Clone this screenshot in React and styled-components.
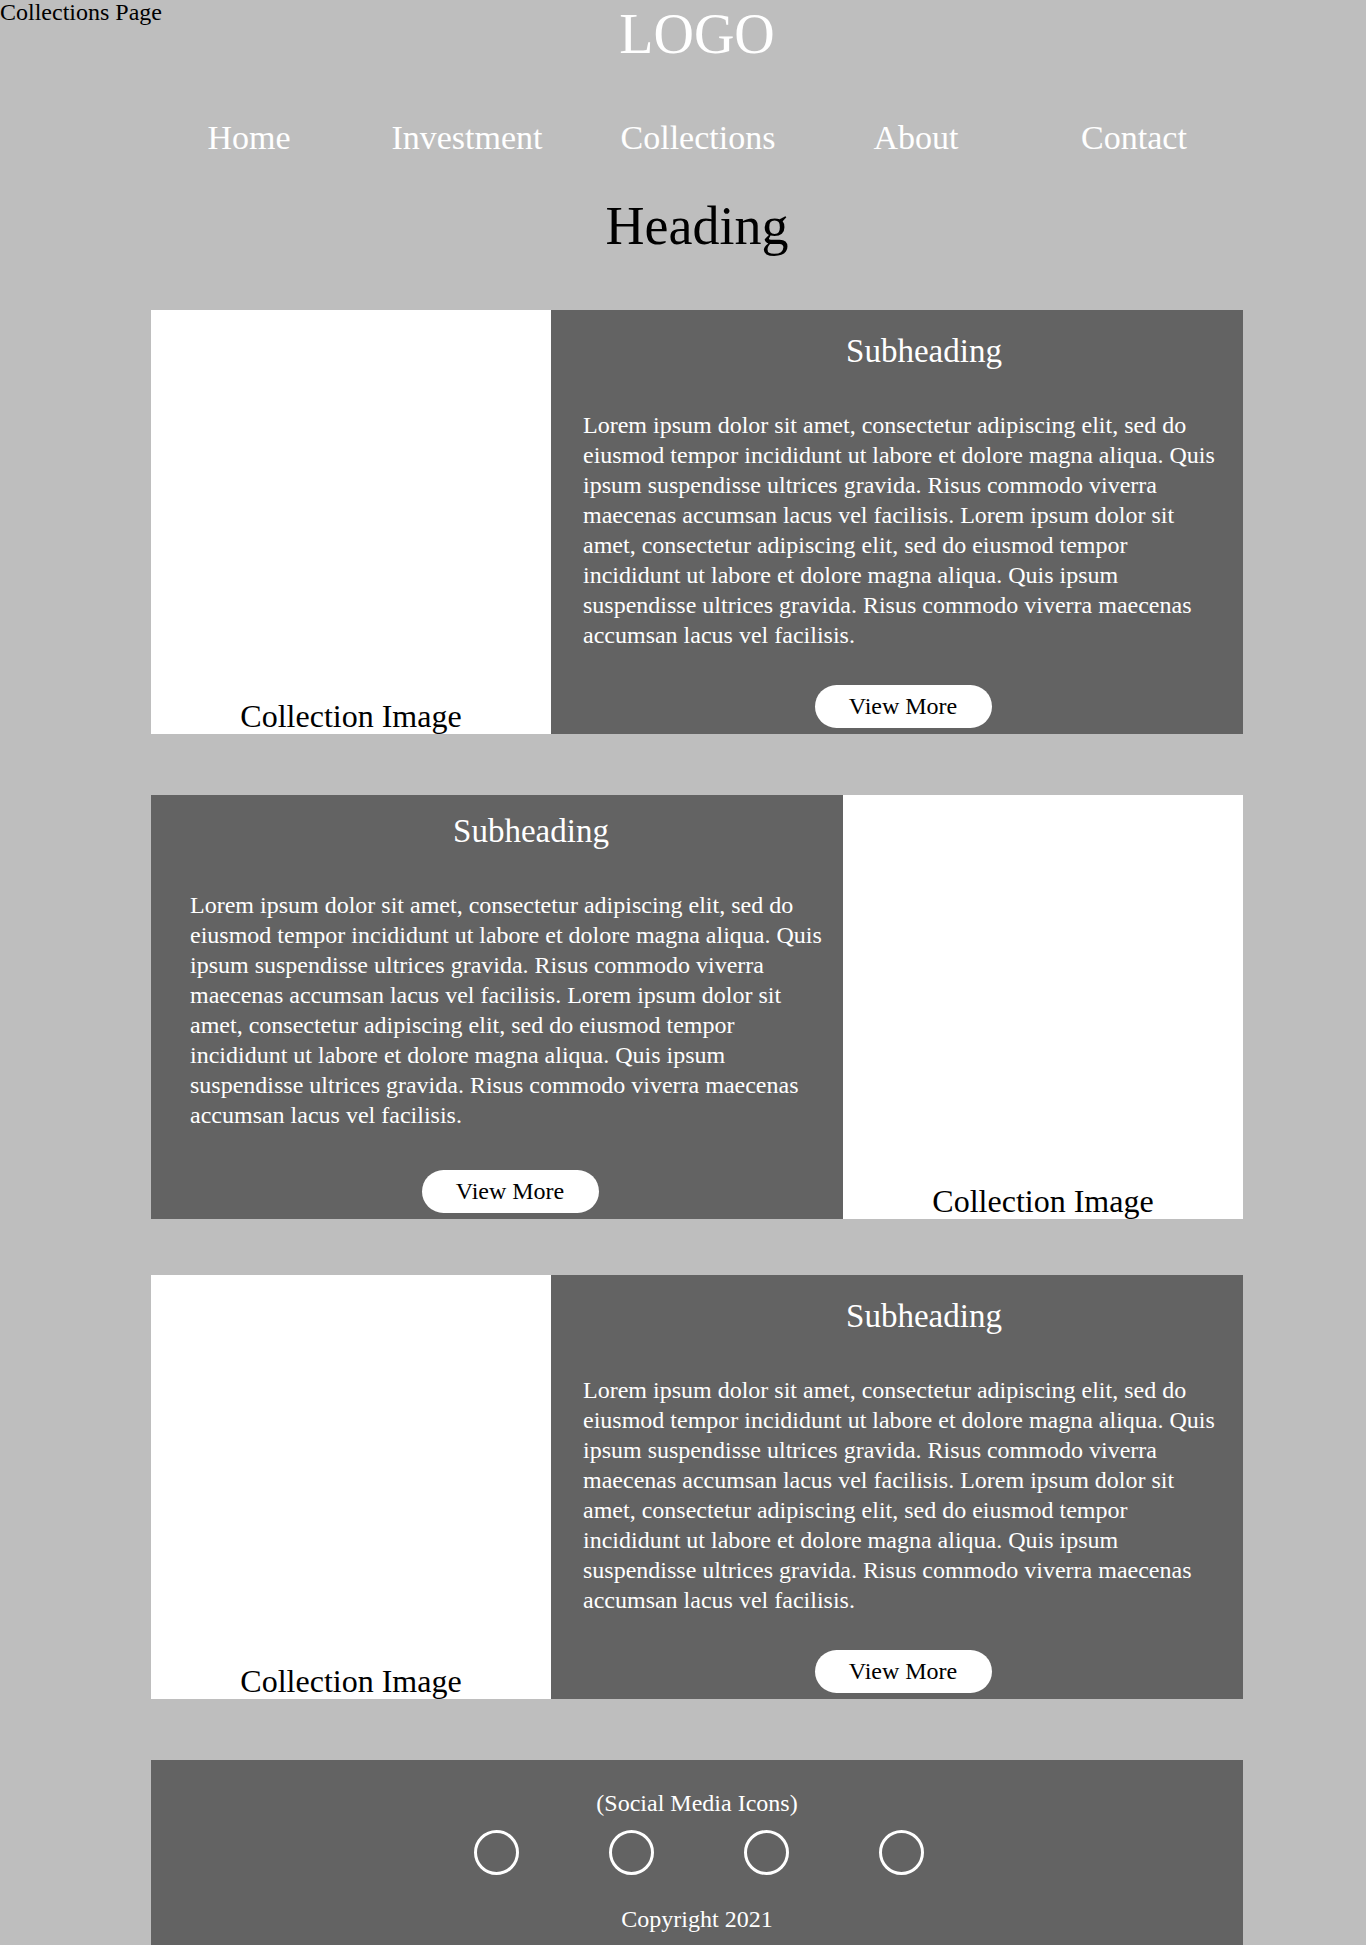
import React from 'react';
import styled, { createGlobalStyle } from 'styled-components';

const lorem = 'Lorem ipsum dolor sit amet, consectetur adipiscing elit, sed do eiusmod tempor incididunt ut labore et dolore magna aliqua. Quis ipsum suspendisse ultrices gravida. Risus commodo viverra maecenas accumsan lacus vel facilisis. Lorem ipsum dolor sit amet, consectetur adipiscing elit, sed do eiusmod tempor incididunt ut labore et dolore magna aliqua. Quis ipsum suspendisse ultrices gravida. Risus commodo viverra maecenas accumsan lacus vel facilisis.'

const navItems = ['Home', 'Investment', 'Collections', 'About', 'Contact']

// image side, text padding, top offset, space after
const collections = [
  { id: 1, imageLeft: true, pad: 32, top: 21, after: 61 },
  { id: 2, imageLeft: false, pad: 39, top: 16, after: 56 },
  { id: 3, imageLeft: true, pad: 32, top: 21, after: 61 }
]

const GlobalStyle = createGlobalStyle`
  html, body {
    margin: 0;
    padding: 0;
    background: #bebebe;
  }
  body {
    font-family: 'Liberation Serif', 'Times New Roman', serif;
  }
`

function CollectionCard({ item }) {
  const image = <ImagePanel>
    <ImageLabel>Collection Image</ImageLabel>
  </ImagePanel>
  const text = <TextPanel $pad={item.pad} $top={item.top}>
    <Inner>
      <Subheading>Subheading</Subheading>
      <Body>
        <Paragraph>{lorem}</Paragraph>
        <ViewMore type='button'>View More</ViewMore>
      </Body>
    </Inner>
  </TextPanel>
  return <Card $imageLeft={item.imageLeft} $after={item.after}>
    {item.imageLeft ? image : text}
    {item.imageLeft ? text : image}
  </Card>
}

function App() {
  return (
    <Page>
      <GlobalStyle />
      <PageLabel>Collections Page</PageLabel>
      <Logo>LOGO</Logo>
      <Nav>
        {navItems.map(item => <NavLink key={item}>{item}</NavLink>)}
      </Nav>
      <Heading>Heading</Heading>
      {collections.map(item => <CollectionCard key={item.id} item={item} />)}
      <Footer>
        <FooterText>(Social Media Icons)</FooterText>
        <Socials>
          {[0, 1, 2, 3].map(i => <SocialCircle key={i} />)}
        </Socials>
        <Copyright>Copyright 2021</Copyright>
      </Footer>
    </Page>
  );
}

const Page = styled.div`
  position: relative;
  width: 1092px;
  margin-left: 151px;
  font-family: 'Liberation Serif', 'Times New Roman', serif;
`
const PageLabel = styled.div`
  position: absolute;
  top: 0;
  left: -151px;
  font-size: 24px;
  line-height: 24px;
  color: #000;
  white-space: nowrap;
`
const Logo = styled.div`
  font-size: 56px;
  line-height: 68px;
  color: #fff;
  text-align: center;
`
const Nav = styled.nav`
  display: grid;
  grid-template-columns: 196px 240px 222px 214px 222px;
  margin-top: 50px;
`
const NavLink = styled.a`
  font-size: 34px;
  line-height: 40px;
  color: #fff;
  text-align: center;
  cursor: pointer;
`
const Heading = styled.h1`
  margin: 36px 0 52px;
  font-size: 54px;
  line-height: 64px;
  font-weight: 400;
  color: #000;
  text-align: center;
`
const Card = styled.section`
  display: grid;
  grid-template-columns: ${p => p.$imageLeft ? '400px 1fr' : '1fr 400px'};
  height: 424px;
  margin-bottom: ${p => p.$after}px;
`
const ImagePanel = styled.div`
  background: #fff;
  display: flex;
  flex-direction: column;
  justify-content: flex-end;
  align-items: center;
`
const ImageLabel = styled.div`
  font-size: 32px;
  line-height: 36px;
  color: #000;
`
const TextPanel = styled.div`
  background: #636363;
  overflow: hidden;
  display: flex;
  padding: ${p => p.$top}px 0 6px ${p => p.$pad}px;
`
const Inner = styled.div`
  width: 682px;
  flex-shrink: 0;
  display: flex;
  flex-direction: column;
`
const Subheading = styled.h2`
  margin: 0;
  font-size: 33px;
  line-height: 40px;
  font-weight: 400;
  color: #fff;
  text-align: center;
`
const Body = styled.div`
  width: 640px;
  flex: 1;
  display: flex;
  flex-direction: column;
`
const Paragraph = styled.p`
  margin: 39px 0 0;
  font-size: 24px;
  line-height: 30px;
  color: #fff;
`
const ViewMore = styled.button`
  margin-top: auto;
  align-self: center;
  width: 177px;
  height: 43px;
  border: none;
  border-radius: 22px;
  background: #fff;
  color: #000;
  font-family: 'Liberation Serif', 'Times New Roman', serif;
  font-size: 24px;
  cursor: pointer;
  padding: 0;
`
const Footer = styled.footer`
  background: #636363;
  padding: 28px 0 11px;
  display: flex;
  flex-direction: column;
  align-items: center;
`
const FooterText = styled.div`
  font-size: 24px;
  line-height: 30px;
  color: #fff;
`
const Socials = styled.div`
  display: flex;
  gap: 90px;
  margin-top: 12px;
  margin-left: 4px;
`
const SocialCircle = styled.span`
  display: block;
  width: 45px;
  height: 45px;
  box-sizing: border-box;
  border: 3px solid #fff;
  border-radius: 50%;
`
const Copyright = styled.div`
  margin-top: 29px;
  font-size: 24px;
  line-height: 30px;
  color: #fff;
`

export default App;
